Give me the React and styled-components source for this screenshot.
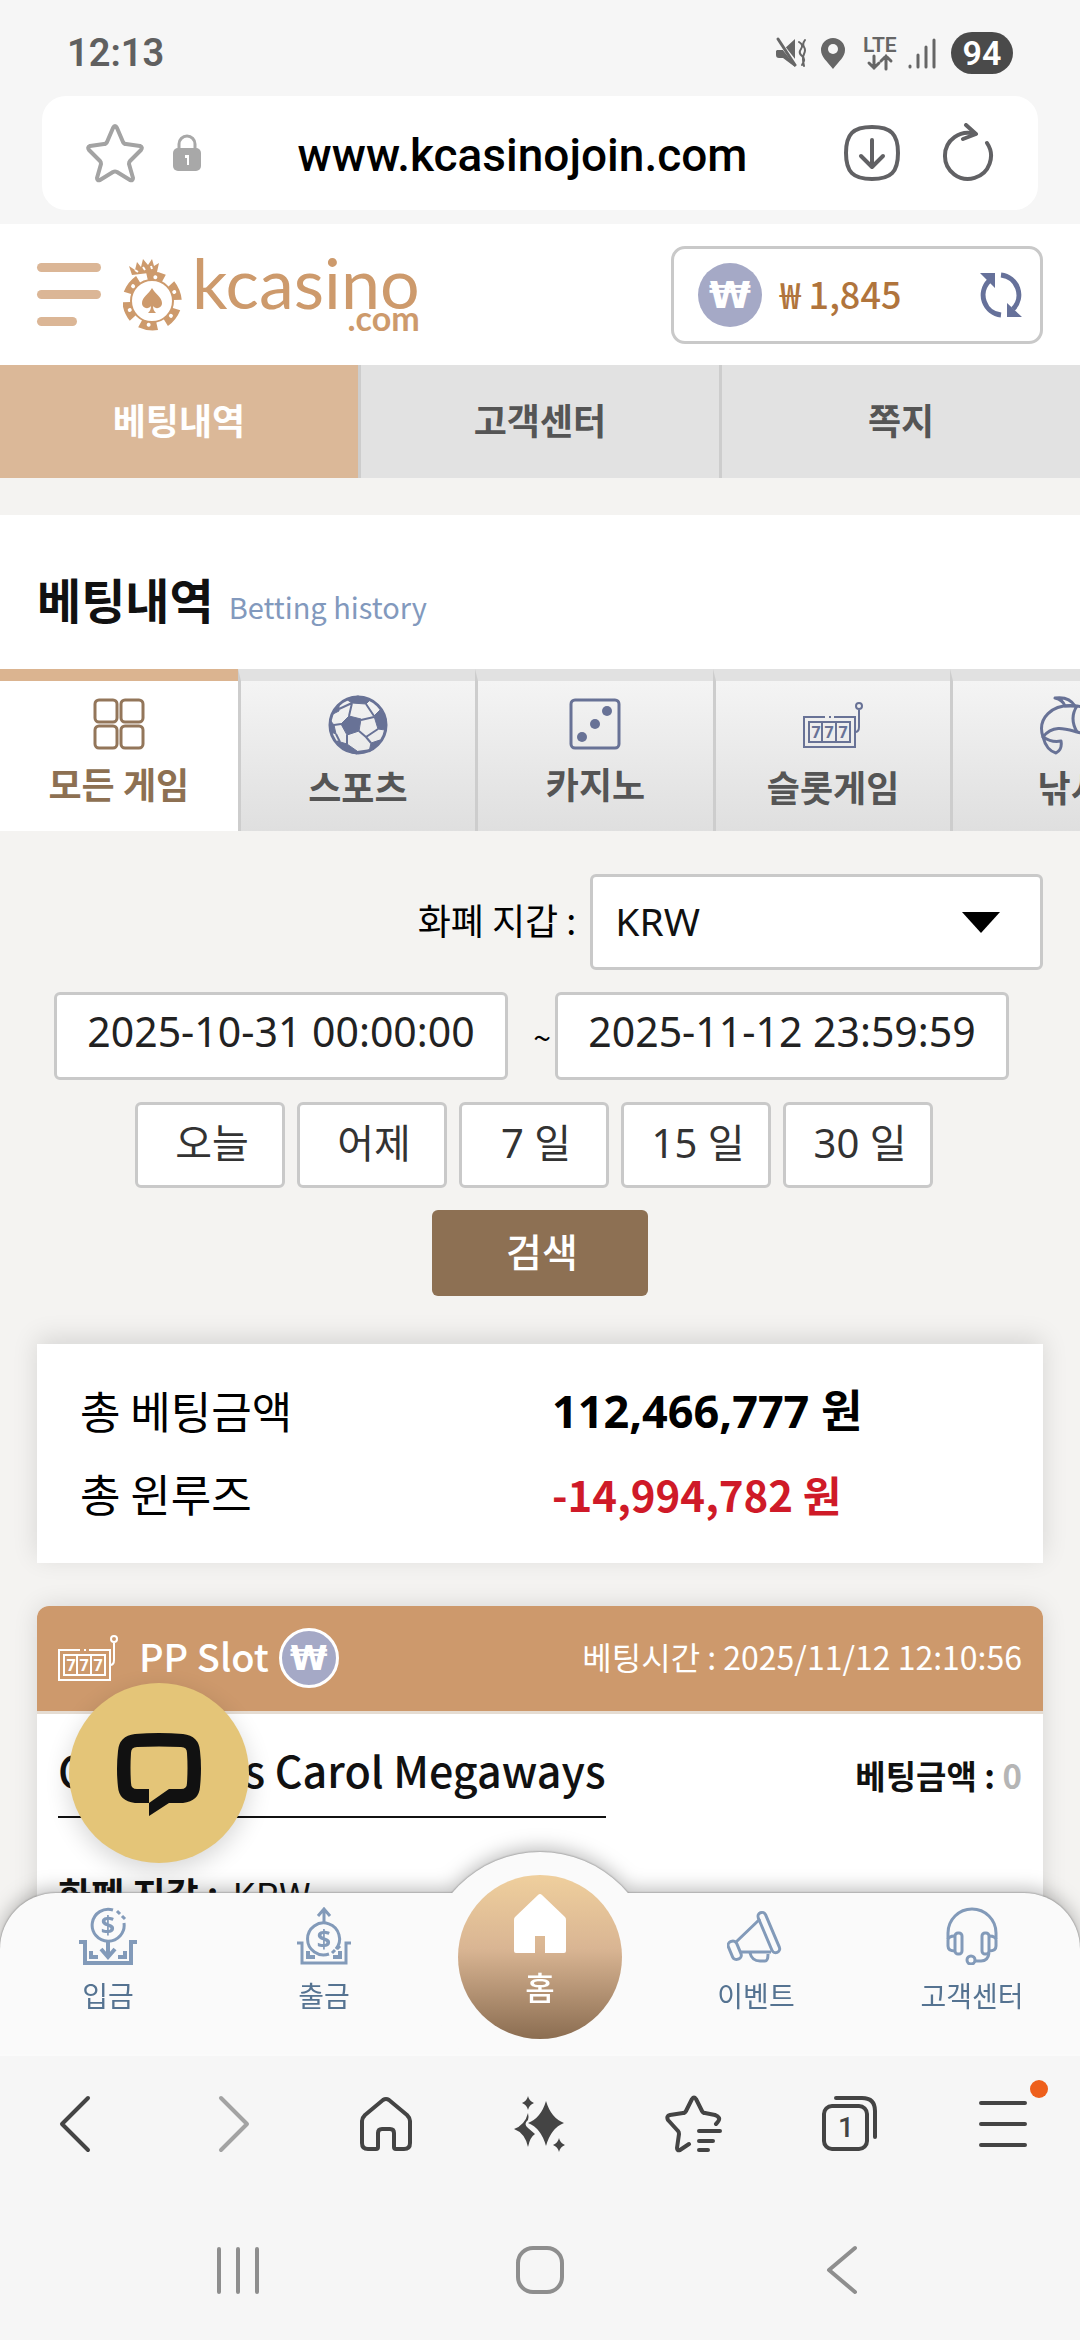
import React, { useState } from 'react';
import styled, { createGlobalStyle } from 'styled-components';

const GlobalStyle = createGlobalStyle`
  * {
    box-sizing: border-box;
  }
  body {
    margin: 0;
    background-color: #f6f6f6;
    font-family: 'Noto Sans CJK KR', 'Noto Sans', sans-serif;
    color: #111;
  }
  button, input, select {
    font-family: inherit;
    margin: 0;
  }
  button {
    border: 0;
    padding: 0;
    background: none;
    cursor: pointer;
  }
  a {
    text-decoration: none;
  }
  svg {
    display: block;
    flex: none;
  }
`;

/* ---------- icons ---------- */

const StatusIcons = () => (
  <svg width="162" height="44" viewBox="0 -3 162 44" fill="none" stroke="#666" strokeWidth="3" strokeLinecap="round">
    <path d="M2 16h6l12-11v28L8 24H4a3 3 0 0 1-3-3v-4z" fill="#666" stroke="none" />
    <path d="M1 4l22 28" stroke="#f6f6f6" strokeWidth="4" />
    <path d="M3 5l17 26" strokeWidth="3" />
    <path d="M24 8q5 3 2 7t1 7 0 9M30 6q-3 4-1 7t0 7 0 12" strokeWidth="2" />
    <path d="M58 4a12 12 0 0 0-12 12c0 7 6 11 12 19 6-8 12-12 12-19A12 12 0 0 0 58 4z" fill="#666" stroke="none" />
    <circle cx="58" cy="15" r="5" fill="#f6f6f6" stroke="none" />
    <text x="88" y="18" fontSize="21" fontWeight="600" fontFamily="Roboto, sans-serif" fill="#666" stroke="none">LTE</text>
    <path d="M99 22v12M94 29l5 5 5-5M111 35V22M106 27l5-5 5 5" strokeWidth="3" />
    <path d="M135 32v1M143 21v12M151 13v20M159 6v27" strokeWidth="3" />
  </svg>
);

const StarIcon = () => (
  <svg width="58" height="60" viewBox="0 0 58 60" fill="none" stroke="#a3a3a3" strokeWidth="4" strokeLinejoin="round">
    <path d="M29 3q1 0 2 2l6 14q1 2 3 2l14 2q3 1 1 4L44 38q-1 1-1 3l4 14q0 3-3 2l-13-8q-2-1-4 0l-13 8q-3 1-3-2l4-14q0-2-1-3L3 27q-2-3 1-4l14-2q2 0 3-2l6-14q1-2 2-2z" />
  </svg>
);

const LockIcon = () => (
  <svg width="28" height="38" viewBox="0 0 28 38">
    <path d="M6 16V10a8 8 0 0 1 16 0v6" fill="none" stroke="#a8a8a8" strokeWidth="3" />
    <rect y="14" width="28" height="23" rx="5" fill="#a8a8a8" />
    <path d="M12 21h4v10h-2v-7h-2z" fill="#fff" />
  </svg>
);

const DownloadIcon = () => (
  <svg width="56" height="56" viewBox="0 0 56 56" fill="none" stroke="#616164" strokeWidth="4" strokeLinecap="round" strokeLinejoin="round">
    <path d="M28 2c19 0 26 7 26 26s-7 26-26 26S2 47 2 28 9 2 28 2z" />
    <path d="M28 15v26M17 31l11 11 11-11" />
  </svg>
);

const ReloadIcon = () => (
  <svg width="52" height="60" viewBox="0 0 52 60" fill="none" stroke="#616164" strokeWidth="4" strokeLinecap="round" strokeLinejoin="round">
    <path d="M45 20A23 23 0 1 1 33 11" />
    <path d="M24 2l10 9-13 5" />
  </svg>
);

const chipAngles = [8, 68, 128, 188, 248, 308];

const ChipLogo = () => (
  <svg width="60" height="74" viewBox="0 0 60 74" fill="#cd9a6c">
    <path d="M9 17L6 8l6 4 2-8 4 5 2-8 5 6 4-6 2 7 5-3-2 9z" />
    <path d="M12 12l3 2M20 9l2 3M28 8l1 3" stroke="#fff" strokeWidth="2" />
    <circle cx="29" cy="43" r="21" fill="none" stroke="#cd9a6c" strokeWidth="2" />
    {chipAngles.map((a) => (
      <g key={a} transform={`rotate(${a} 29 43)`}>
        <path d="M19 15q10-3 20 0l-3 8q-7-2-14 0z" />
        <circle cx="29" cy="19" r="2" fill="#fff" />
      </g>
    ))}
    <path d="M29 30c3 6 10 9 10 15 0 5-6 7-9 3 0 3 1 5 3 7h-8c2-2 3-4 3-7-3 4-9 2-9-3 0-6 7-9 10-15z" />
  </svg>
);

const SyncIcon = () => (
  <svg width="44" height="46" viewBox="0 0 44 46" fill="none" stroke="#66719a" strokeWidth="5">
    <path d="M22 43A20 20 0 0 1 10 9M22 3a20 20 0 0 1 12 34" />
    <path d="M1 1h15v15zM43 45H28V31z" fill="#66719a" stroke="none" />
  </svg>
);

const GridIcon = () => (
  <svg width="52" height="52" viewBox="0 0 52 52" fill="none" stroke="#93765a" strokeWidth="3">
    <rect x="2" y="2" width="22" height="22" rx="4" />
    <rect x="28" y="2" width="22" height="22" rx="4" />
    <rect x="2" y="28" width="22" height="22" rx="4" />
    <rect x="28" y="28" width="22" height="22" rx="4" />
  </svg>
);

const BallIcon = () => (
  <svg width="60" height="60" viewBox="0 0 60 60" fill="none" stroke="#687296" strokeWidth="3" strokeLinejoin="round">
    <circle cx="30" cy="30" r="28" />
    <g fill="#687296" strokeWidth="1">
      <path d="M13 29l8-8 12 3-2 12-12 4z" />
      <path d="M18 4l12-3 12 4-4 4-14-1z" />
      <path d="M46 21l6-6 6 9-1 11-7-1z" />
      <path d="M2 25l4 5 2 9-5-2z" />
      <path d="M9 46l10 3 10 7v3q-14-2-20-13z" />
      <path d="M43 48l9-3q-4 8-11 12z" />
      <path d="M5 19l6-10v7z" />
    </g>
    <path d="M24 8l-3 13M38 9l8 12M33 25l13-3M31 36l7 6 12-8M38 42l5 6M19 40l0 9M13 29l-7 1M11 14l13-6M8 39l4 8M29 57l14-2" strokeWidth="2" />
  </svg>
);

const DiceIcon = () => (
  <svg width="52" height="52" viewBox="0 0 52 52" fill="#687296">
    <rect x="2" y="2" width="48" height="48" rx="4" fill="none" stroke="#687296" strokeWidth="3" />
    <circle cx="38" cy="13" r="5" />
    <circle cx="26" cy="26" r="5" />
    <circle cx="13" cy="39" r="5" />
  </svg>
);

const SlotIcon = ({ color }) => (
  <svg width="60" height="46" viewBox="0 0 60 46" fill="none" stroke={color} strokeWidth="2">
    <path d="M22 15H1v30h51V15H31M26 15h2" />
    <rect x="6" y="20" width="41" height="20" />
    <path d="M19 20v20M33 20v20M52 30q4 0 4-5V8" />
    <circle cx="56" cy="4" r="3" />
    <g fontFamily="'Noto Sans', sans-serif" fontSize="16" fontWeight="700" fill={color} stroke="none" textAnchor="middle">
      <text x="13" y="36">7</text>
      <text x="26" y="36">7</text>
      <text x="40" y="36">7</text>
    </g>
  </svg>
);

const FishIcon = () => (
  <svg width="64" height="60" viewBox="0 0 64 60" fill="none" stroke="#687296" strokeWidth="3" strokeLinejoin="round">
    <path d="M4 42C-2 24 12 8 38 11c14 2 22 12 24 26-8 2-16 2-24 0-11-3-24-8-34 5z" />
    <path d="M16 3q14-2 20 8h-10q-2-6-10-8zM38 11q-8 12 0 26M4 42c6 4 13 5 18 4 1 6-1 10-5 12-7-2-11-8-13-16z" />
    <circle cx="49" cy="23" r="2" />
  </svg>
);

const ChatIcon = () => (
  <svg width="84" height="84" viewBox="0 0 84 84" fill="#111">
    <path fillRule="evenodd" d="M18 1q24-2 48 0 16 2 17 17 2 17 0 36-1 14-17 16H52L32 83V70H18Q2 68 1 54q-2-18 0-36Q2 3 18 1zM20 14q22-1 44 0 6 0 6 6 1 15 0 30 0 6-6 6H52L32 70V56H20q-6 0-6-6-1-15 0-30 0-6 6-6z" />
  </svg>
);

const CoinText = ({ y }) => (
  <text x="29" y={y} fontFamily="'Noto Sans', sans-serif" fontSize="25" fontWeight="700" fill="#829ab9" stroke="none" textAnchor="middle">$</text>
);

const DepositIcon = () => (
  <svg width="58" height="58" viewBox="0 0 58 58" fill="none" stroke="#829ab9" strokeWidth="4">
    <path d="M34 3a16 16 0 1 0 11 13M38 4l3 3M43 9l3 3" strokeWidth="3" />
    <CoinText y={27} />
    <path d="M29 34v14M22 42l7 8 7-8M0 35h6v21h46V35h6" />
    <path d="M12 44v6h7M46 44v6h-7" />
  </svg>
);

const WithdrawIcon = () => (
  <svg width="58" height="58" viewBox="0 0 58 58" fill="none" stroke="#829ab9" strokeWidth="4">
    <path d="M41 42a16 16 0 1 0-7 5M37 46l3-3M42 42l3-3" strokeWidth="3" />
    <CoinText y={41} />
    <path d="M29 16V3M23 9l6-7 6 7M2 36h5v20h44V36h5" strokeWidth="3" />
    <path d="M13 44v6h7M45 44v6h-7" />
  </svg>
);

const MegaphoneIcon = () => (
  <svg width="58" height="58" viewBox="0 0 58 58" fill="none" stroke="#829ab9" strokeWidth="3" strokeLinejoin="round">
    <rect x="38" y="4" width="8" height="43" rx="4" transform="rotate(-23 42 26)" />
    <rect x="3" y="34" width="9" height="19" rx="4" transform="rotate(-23 7 43)" />
    <path d="M9 35L33 12M13 45h31M23 46q2 8 10 8h5q3 0 3-7" />
  </svg>
);

const HeadsetIcon = () => (
  <svg width="52" height="58" viewBox="0 0 52 58" fill="none" stroke="#829ab9" strokeWidth="3">
    <path d="M2 32V26a24 24 0 0 1 48 0v6" />
    <rect x="9" y="26" width="7" height="21" rx="3" />
    <rect x="36" y="26" width="7" height="21" rx="3" />
    <path d="M9 29q-7 0-7 4v6q0 5 7 5M43 29q7 0 7 4v6q0 5-7 5M43 46q-1 8-8 8h-6" />
    <circle cx="25" cy="53" r="4" />
  </svg>
);

const HouseIcon = () => (
  <svg width="52" height="60" viewBox="0 0 52 60" fill="#fff">
    <path d="M24 1q2-2 4 0l23 22q1 1 1 3v31q0 2-2 2H31V42H21v17H2q-2 0-2-2V26q0-2 1-3z" />
  </svg>
);

const barIcons = {
  back: <path d="M40 3L14 29l26 26" />,
  forward: <path d="M19 3l26 26-26 26" stroke="#a3a3a3" />,
  home: <path d="M26 5q3-2 6 0l18 15q3 3 3 6v22q0 6-6 6h-8q-2 0-2-2V38q0-4-4-4h-8q-4 0-4 4v14q0 2-2 2h-8q-6 0-6-6V26q0-3 3-6z" />,
  ai: (
    <g fill="#444" stroke="none">
      <path d="M35 6q5 17 18 22-13 5-18 23-5-18-18-23Q30 23 35 6z" />
      <path d="M17 18q1 4 0 7-5 4 0 8l7 6q-5 3-7 13Q14 38 3 34q11-4 14-16zM17 1q1 5 6 7-5 2-6 7-1-5-6-7 5-2 6-7zM48 43q1 5 6 7-5 2-6 7-1-5-6-7 5-2 6-7z" />
    </g>
  ),
  bookmarks: <path d="M51 29q4-4 3-6t-4-3l-10-2q-2 0-3-2L31 4q-2-3-4 0l-6 12q-1 2-3 2L5 20q-4 1-2 5l10 11q1 1 1 3l-2 14q0 3 3 2l9-6M34 36h21M34 46h14M34 55h9" />,
  tabs: (
    <g>
      <rect x="4" y="11" width="43" height="43" rx="8" />
      <path d="M16 3h26q13 0 13 13v26" />
      <text x="26" y="42" fontFamily="Roboto, sans-serif" fontSize="28" fontWeight="500" fill="#444" stroke="none" textAnchor="middle">1</text>
    </g>
  ),
  menu: <path d="M7 8h44M7 29h44M7 50h44" />,
};

/* ---------- layout ---------- */

const Shell = styled.div`
  height: 100vh;
  display: flex;
  flex-direction: column;
  background-color: #f6f6f6;
`;

const StatusBar = styled.div`
  height: 96px;
  padding: 10px 67px 0 67px;
  display: flex;
  align-items: center;
  justify-content: space-between;
  font-family: Roboto, sans-serif;
  font-size: 38px;
  font-weight: 600;
  color: #606060;
  .right {
    display: flex;
    align-items: center;
    gap: 14px;
  }
`;

const Battery = styled.span`
  width: 62px;
  height: 42px;
  border-radius: 21px;
  background-color: #4a4a4a;
  color: #fff;
  font-size: 34px;
  line-height: 42px;
  text-align: center;
`;

const AddressBar = styled.div`
  height: 114px;
  margin: 0 42px 14px;
  padding: 0 44px;
  border-radius: 24px;
  background-color: #fff;
  display: flex;
  align-items: center;
  .lock {
    margin-left: 29px;
  }
  .reload {
    margin-left: 42px;
  }
`;

const UrlInput = styled.input`
  flex: 1;
  min-width: 0;
  border: 0;
  padding: 3px 0 0;
  background: none;
  text-align: center;
  font-family: Roboto, sans-serif;
  font-size: 46px;
  font-weight: 500;
  color: #000;
`;

const Viewport = styled.main`
  flex: 1;
  min-height: 0;
  position: relative;
  overflow: hidden;
  background-color: #f4f3f1;
`;

const Header = styled.header`
  height: 141px;
  padding: 0 37px;
  background-color: #fff;
  display: flex;
  align-items: center;
`;

const MenuButton = styled.button`
  width: 64px;
  display: flex;
  flex-direction: column;
  gap: 18px;
  span {
    height: 9px;
    border-radius: 5px;
    background-color: #dbb696;
  }
  span:last-child {
    width: 40px;
  }
`;

const Logo = styled.a`
  margin-left: 22px;
  display: flex;
  align-items: center;
  gap: 9px;
  font-family: Lato, sans-serif;
  color: #cd9a6c;
  .words {
    padding-bottom: 4px;
    display: flex;
    flex-direction: column;
    align-items: flex-end;
  }
  .name {
    font-size: 70px;
    line-height: 50px;
  }
  .tld {
    font-size: 34px;
    line-height: 22px;
    font-weight: 700;
  }
`;

const Wallet = styled.div`
  width: 372px;
  height: 98px;
  margin-left: auto;
  padding: 0 17px 0 24px;
  border: 3px solid #c9c9c9;
  border-radius: 14px;
  display: flex;
  align-items: center;
  .amount {
    flex: 1;
    margin-left: 18px;
    padding-bottom: 4px;
    font-size: 36px;
    line-height: 50px;
    font-weight: 500;
    color: #b0743c;
  }
`;

const WonCoin = styled.span`
  width: ${(p) => (p.$outlined ? 60 : 64)}px;
  height: ${(p) => (p.$outlined ? 60 : 64)}px;
  border: ${(p) => (p.$outlined ? '3px solid #fff' : '0')};
  border-radius: 50%;
  background-color: #a5a9c6;
  color: #fff;
  display: flex;
  align-items: center;
  justify-content: center;
  font-family: 'DejaVu Sans', sans-serif;
  font-size: ${(p) => (p.$outlined ? 34 : 38)}px;
  line-height: 40px;
  font-weight: 700;
`;

const TopTabs = styled.nav`
  display: flex;
  height: 113px;
`;

const TopTab = styled.a`
  flex: 1;
  padding-bottom: 6px;
  display: flex;
  align-items: center;
  justify-content: center;
  border-left: ${(p) => (p.$first ? '0' : '3px solid #cdcdcd')};
  background-color: ${(p) => (p.$active ? '#dbb898' : '#e2e2e2')};
  color: ${(p) => (p.$active ? '#fff' : '#555')};
  font-size: 36px;
  line-height: 50px;
  font-weight: 700;
`;

const TitleBand = styled.div`
  height: 154px;
  margin-top: 37px;
  padding: 12px 37px 0;
  background-color: #fff;
  display: flex;
  align-items: center;
  h1 {
    margin: 0;
    font-size: 48px;
    line-height: 66px;
    font-weight: 700;
  }
  span {
    margin: 16px 0 0 15px;
    font-size: 29px;
    line-height: 44px;
    color: #8299bd;
  }
`;

const Categories = styled.div`
  display: flex;
  overflow: hidden;
`;

const Category = styled.button`
  flex: 0 0 22%;
  height: 162px;
  padding-top: 14px;
  display: flex;
  flex-direction: column;
  align-items: center;
  gap: 9px;
  border-top: 12px solid ${(p) => (p.$active ? '#dbb490' : '#e1e1e1')};
  border-left: ${(p) => (p.$first ? '0' : '3px solid #cdcdcd')};
  background: ${(p) => (p.$active ? '#fff' : 'linear-gradient(#f4f4f4, #dfdfdf)')};
  color: ${(p) => (p.$active ? '#8d7052' : '#555')};
  font-size: 36px;
  line-height: 44px;
  font-weight: 700;
  white-space: nowrap;
  .icon {
    height: ${(p) => (p.$short ? 57 : 60)}px;
    display: flex;
    align-items: center;
  }
`;

const SearchForm = styled.form`
  padding-top: 43px;
  display: flex;
  flex-direction: column;
  gap: 22px;
`;

const CurrencyRow = styled.div`
  padding: 0 37px;
  display: flex;
  align-items: center;
  justify-content: flex-end;
  gap: 14px;
  label {
    padding-bottom: 6px;
    font-size: 36px;
    line-height: 50px;
    color: #000;
  }
  .select {
    position: relative;
    width: 45%;
  }
  .select::after {
    content: '';
    position: absolute;
    right: 43px;
    top: 38px;
    border: 19px solid transparent;
    border-top: 21px solid #000;
    border-bottom: 0;
    pointer-events: none;
  }
`;

const Select = styled.select`
  width: 100%;
  height: 96px;
  padding: 0 22px 4px;
  appearance: none;
  border: 3px solid #c9c9c9;
  border-radius: 6px;
  background-color: #fff;
  color: #111;
  font-family: 'Noto Sans', sans-serif;
  font-size: 39px;
`;

const DateRow = styled.div`
  padding: 0 71px 0 54px;
  display: flex;
  align-items: center;
  span {
    flex: 1;
    padding-right: 4px;
    text-align: right;
    font-size: 32px;
    color: #000;
  }
`;

const DateInput = styled.input`
  width: 454px;
  height: 88px;
  padding: 0 0 10px;
  border: 3px solid #c9c9c9;
  border-radius: 6px;
  background-color: #fff;
  color: #222;
  text-align: center;
  font-family: 'Noto Sans', sans-serif;
  font-size: 41px;
`;

const ButtonRow = styled.div`
  padding-right: 12px;
  display: flex;
  justify-content: center;
  gap: 12px;
`;

const RangeButton = styled.button`
  width: 150px;
  height: 86px;
  padding: 0 0 4px 4px;
  border: 3px solid #c9c9c9;
  border-radius: 6px;
  background-color: #fff;
  color: #333;
  font-family: 'Noto Sans', 'Noto Sans CJK KR', sans-serif;
  font-size: 40px;
  line-height: 56px;
`;

const SearchButton = styled.button`
  align-self: center;
  width: 216px;
  height: 86px;
  padding: 0 0 6px 4px;
  border-radius: 6px;
  background-color: #8d7053;
  color: #fff;
  font-size: 39px;
  font-weight: 500;
`;

const Summary = styled.dl`
  margin: 48px 37px 43px;
  padding: 25px 0 28px;
  display: grid;
  grid-template-columns: 51% 1fr;
  background-color: #fff;
  box-shadow: 0 -6px 24px rgba(0, 0, 0, 0.12);
  font-size: 44px;
  line-height: 83px;
  color: #000;
  dt {
    padding-left: 43px;
  }
  dd {
    margin: 0;
    padding-left: 2px;
    font-weight: 700;
  }
  .total {
    font-family: 'Noto Sans', 'Noto Sans CJK KR', sans-serif;
    font-size: 45px;
  }
  .loss {
    color: #cf1a28;
    font-size: 42px;
  }
`;

const BetCard = styled.article`
  margin: 0 37px;
  height: 600px;
  border-radius: 12px;
  background-color: #fff;
  box-shadow: 0 0 24px rgba(0, 0, 0, 0.12);
`;

const BetHead = styled.div`
  height: 108px;
  padding: 0 21px 2px 21px;
  display: flex;
  align-items: center;
  border-radius: 12px 12px 0 0;
  border-bottom: 3px solid #e5dcd2;
  background-color: #cd996c;
  background-clip: padding-box;
  color: #fff;
  h2 {
    margin: 0 10px 4px 21px;
    font-size: 38px;
    line-height: 54px;
    font-weight: 500;
  }
  time {
    margin: 0 0 4px auto;
    font-size: 32px;
    line-height: 44px;
  }
`;

const BetName = styled.div`
  padding: 0 21px;
  display: flex;
  align-items: center;
  justify-content: space-between;
  height: 128px;
  .game {
    padding-bottom: 16px;
    border-bottom: 2px solid #111;
    font-size: 43px;
    line-height: 62px;
    font-weight: 500;
    color: #111;
  }
  .stake {
    padding-bottom: 6px;
    font-size: 33px;
    line-height: 44px;
    font-weight: 700;
  }
  .stake span {
    color: #b5b5b5;
  }
`;

const BetField = styled.p`
  margin: 26px 0 0;
  padding: 0 21px;
  font-size: 36px;
  line-height: 50px;
  b {
    margin-right: 6px;
  }
`;

const ChatButton = styled.button`
  position: absolute;
  left: 69px;
  bottom: 191px;
  width: 180px;
  height: 180px;
  padding-top: 4px;
  border-radius: 50%;
  background-color: #e4c578;
  box-shadow: 0 8px 24px rgba(0, 0, 0, 0.16);
  display: flex;
  align-items: center;
  justify-content: center;
`;

const QuickNav = styled.nav`
  position: absolute;
  left: 0;
  right: 0;
  bottom: 0;
  height: 161px;
  display: flex;
  border-radius: 56px 56px 0 0;
  background-color: #fafafa;
  filter: drop-shadow(0 0 1px #777) drop-shadow(0 -4px 9px rgba(0, 0, 0, 0.25));
  &::before {
    content: '';
    position: absolute;
    left: calc(50% - 115px);
    top: -41px;
    width: 230px;
    height: 230px;
    border-radius: 50%;
    background-color: #fafafa;
  }
`;

const QuickLink = styled.a`
  flex: 1;
  padding-top: 14px;
  display: flex;
  flex-direction: column;
  align-items: center;
  gap: 10px;
  font-size: 28px;
  line-height: 40px;
  color: #557391;
`;

const HomeLink = styled.a`
  position: absolute;
  left: calc(50% - 82px);
  top: -18px;
  width: 164px;
  height: 164px;
  padding-top: 19px;
  border-radius: 50%;
  background: linear-gradient(#efcf9d, #d9b593 45%, #8b6d51);
  display: flex;
  flex-direction: column;
  align-items: center;
  gap: 12px;
  color: #fff;
  font-size: 32px;
  line-height: 40px;
  font-weight: 500;
`;

const BrowserBar = styled.div`
  height: 137px;
  display: flex;
  align-items: center;
  justify-content: space-between;
  padding: 0 48px;
  border-top: 2px solid #fbfbfb;
`;

const BarButton = styled.button`
  position: relative;
  svg {
    fill: none;
    stroke: #444;
    stroke-width: 4px;
    stroke-linecap: round;
    stroke-linejoin: round;
  }
  i {
    position: absolute;
    top: -15px;
    right: -16px;
    width: 18px;
    height: 18px;
    border-radius: 50%;
    background-color: #ee5f1b;
  }
`;

const SystemBar = styled.div`
  height: 149px;
  padding: 9px 8% 0;
  display: flex;
  align-items: center;
  justify-content: space-around;
  svg {
    fill: none;
    stroke: #8e8e8e;
    stroke-width: 4px;
    stroke-linecap: round;
    stroke-linejoin: round;
  }
`;

const categories = [
  { id: 'all', label: '모든 게임', icon: <GridIcon />, short: true },
  { id: 'sports', label: '스포츠', icon: <BallIcon /> },
  { id: 'casino', label: '카지노', icon: <DiceIcon />, short: true },
  { id: 'slot', label: '슬롯게임', icon: <SlotIcon color="#687296" /> },
  { id: 'fishing', label: '낚시', icon: <FishIcon /> },
];

const ranges = ['오늘', '어제', '7 일', '15 일', '30 일'];

const barItems = [
  ['back', '뒤로'],
  ['forward', '앞으로'],
  ['home', '홈'],
  ['ai', 'AI'],
  ['bookmarks', '북마크'],
  ['tabs', '탭'],
  ['menu', '메뉴'],
];

const App = () => {
  const [category, setCategory] = useState('all');
  const [from, setFrom] = useState('2025-10-31 00:00:00');
  const [to, setTo] = useState('2025-11-12 23:59:59');

  return (
    <Shell>
      <GlobalStyle />
      <StatusBar>
        <span>12:13</span>
        <div className="right">
          <StatusIcons />
          <Battery>94</Battery>
        </div>
      </StatusBar>
      <AddressBar>
        <button aria-label="북마크 추가"><StarIcon /></button>
        <span className="lock"><LockIcon /></span>
        <UrlInput aria-label="주소" defaultValue="www.kcasinojoin.com" />
        <button aria-label="다운로드"><DownloadIcon /></button>
        <button className="reload" aria-label="새로고침"><ReloadIcon /></button>
      </AddressBar>

      <Viewport>
        <Header>
          <MenuButton aria-label="메뉴">
            <span />
            <span />
            <span />
          </MenuButton>
          <Logo href="#home">
            <ChipLogo />
            <div className="words">
              <span className="name">kcasino</span>
              <span className="tld">.com</span>
            </div>
          </Logo>
          <Wallet>
            <WonCoin>₩</WonCoin>
            <span className="amount">₩ 1,845</span>
            <button aria-label="잔액 새로고침"><SyncIcon /></button>
          </Wallet>
        </Header>

        <TopTabs>
          <TopTab href="#bets" $active $first>베팅내역</TopTab>
          <TopTab href="#support">고객센터</TopTab>
          <TopTab href="#messages">쪽지</TopTab>
        </TopTabs>

        <TitleBand>
          <h1>베팅내역</h1>
          <span>Betting history</span>
        </TitleBand>

        <Categories>
          {categories.map((c, i) => (
            <Category
              key={c.id}
              $active={c.id === category}
              $first={i === 0}
              $short={c.short}
              onClick={() => setCategory(c.id)}
            >
              <span className="icon">{c.icon}</span>
              {c.label}
            </Category>
          ))}
        </Categories>

        <SearchForm onSubmit={(e) => e.preventDefault()}>
          <CurrencyRow>
            <label htmlFor="currency">화폐 지갑 :</label>
            <div className="select">
              <Select id="currency" defaultValue="KRW">
                <option>KRW</option>
              </Select>
            </div>
          </CurrencyRow>
          <DateRow>
            <DateInput aria-label="시작일" value={from} onChange={(e) => setFrom(e.target.value)} />
            <span>~</span>
            <DateInput aria-label="종료일" value={to} onChange={(e) => setTo(e.target.value)} />
          </DateRow>
          <ButtonRow>
            {ranges.map((r) => (
              <RangeButton key={r} type="button">{r}</RangeButton>
            ))}
          </ButtonRow>
          <SearchButton type="submit">검색</SearchButton>
        </SearchForm>

        <Summary>
          <dt>총 베팅금액</dt>
          <dd className="total">112,466,777 원</dd>
          <dt>총 윈루즈</dt>
          <dd className="loss">-14,994,782 원</dd>
        </Summary>

        <BetCard>
          <BetHead>
            <SlotIcon color="#fff" />
            <h2>PP Slot</h2>
            <WonCoin $outlined>₩</WonCoin>
            <time>베팅시간 : 2025/11/12 12:10:56</time>
          </BetHead>
          <BetName>
            <a className="game" href="#game">Christmas Carol Megaways</a>
            <div className="stake">베팅금액 : <span>0</span></div>
          </BetName>
          <BetField><b>화폐 지갑 :</b> KRW</BetField>
        </BetCard>

        <ChatButton aria-label="채팅 상담"><ChatIcon /></ChatButton>

        <QuickNav>
          <QuickLink href="#deposit"><DepositIcon />입금</QuickLink>
          <QuickLink href="#withdraw"><WithdrawIcon />출금</QuickLink>
          <QuickLink as="div" />
          <QuickLink href="#event"><MegaphoneIcon />이벤트</QuickLink>
          <QuickLink href="#support"><HeadsetIcon />고객센터</QuickLink>
          <HomeLink href="#home"><HouseIcon />홈</HomeLink>
        </QuickNav>
      </Viewport>

      <BrowserBar>
        {barItems.map(([id, label]) => (
          <BarButton key={id} aria-label={label}>
            <svg width="58" height="58" viewBox="0 0 58 58">{barIcons[id]}</svg>
            {id === 'menu' && <i />}
          </BarButton>
        ))}
      </BrowserBar>
      <SystemBar>
        <button aria-label="최근 앱">
          <svg width="50" height="50" viewBox="0 0 50 50"><path d="M6 4v43M25 4v43M44 4v43" /></svg>
        </button>
        <button aria-label="홈 화면">
          <svg width="50" height="50" viewBox="0 0 50 50"><rect x="3" y="3" width="44" height="44" rx="15" /></svg>
        </button>
        <button aria-label="이전">
          <svg width="50" height="50" viewBox="0 0 50 50"><path d="M38 3L12 25l26 22" /></svg>
        </button>
      </SystemBar>
    </Shell>
  );
};

export default App;
